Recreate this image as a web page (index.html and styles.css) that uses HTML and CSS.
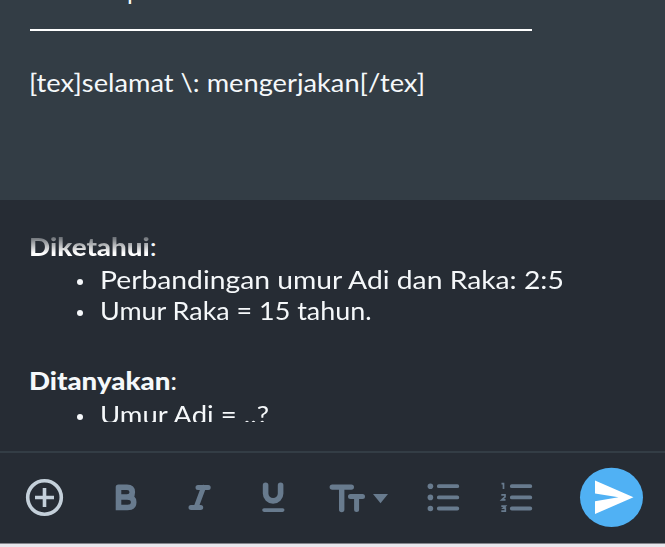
FILE: index.html
```html
<!DOCTYPE html>
<html lang="id">
<head>
<meta charset="utf-8">
<title>Jawaban</title>
<link rel="stylesheet" href="styles.css">
</head>
<body>
<main class="app">
  <section class="question">
    <div class="cut-line"><span>p</span></div>
    <div class="rule"></div>
    <p class="text tex"><span class="w-tex">[tex]selamat \: mengerjakan[/tex]</span></p>
  </section>
  <section class="editor">
    <div class="scroll">
      <p class="text heading"><span class="w-known"><b class="faded">Diketahui</b>:</span></p>
      <ul class="list">
        <li class="text"><span class="w-ratio">Perbandingan umur Adi dan Raka: 2:5</span></li>
        <li class="text"><span class="w-age">Umur Raka = 15 tahun.</span></li>
      </ul>
      <p class="text heading asked"><span class="w-asked"><b>Ditanyakan</b>:</span></p>
      <ul class="list">
        <li class="text"><span class="w-adi">Umur Adi = ..?</span></li>
      </ul>
    </div>
  </section>
  <footer class="toolbar">
    <svg class="icons" viewBox="0 453 665 90" width="665" height="90">
      <g fill="none" stroke="#c4d0da" stroke-width="3.6">
        <circle cx="44.5" cy="497.5" r="16.8"/>
        <path d="M35 497.5h19M44.5 488v19"/>
      </g>
      <g fill="none" stroke="#687b8e" stroke-width="5" stroke-linecap="round" stroke-linejoin="round">
        <path d="M118.500 487.300H127Q132.300 487.300 132.300 492.200Q132.300 497 127 497H118.500M127 497Q133.700 497 133.700 502.200Q133.700 507.500 127.500 507.500H118.500V487.300" stroke-width="5.600" stroke-linejoin="miter"/>
        <path d="M198 487.400h10.200M191 507.500h9.700M203.500 487.400l-7.500 20.100"/>
        <path d="M265.600 485.200v8.200a7.500 7.500 0 0 0 15 0v-8.200" stroke-width="5.600"/>
        <path d="M264 510.100h18.700" stroke-width="3.6"/>
        <path d="M332.300 487.100h19M341.700 487.100v22.500" stroke-width="5.400"/>
        <path d="M350.500 496.600h12M356.600 496.600v13" stroke-width="5"/>
        <path d="M438.800 486.200h18.500M438.800 497.400h18.500M438.800 508.500h18.500M511.800 486.200h18.500M511.800 497.400h18.500M511.800 508.500h18.500" stroke-width="3.800"/>
        <path d="M501.500 483.700h2v5.200M501.300 494.900h3.700v2l-3.200 3h3.700M501.300 506.100h4l-2 2h2v3h-4" stroke-width="1.700" stroke-linecap="butt" stroke-linejoin="miter"/>
      </g>
      <g fill="#687b8e">
        <path d="M373 494h15l-7.500 9.200z"/>
        <circle cx="430.400" cy="486.300" r="2.800"/>
        <circle cx="430.400" cy="497.400" r="2.800"/>
        <circle cx="430.400" cy="508.500" r="2.800"/>
      </g>
      <ellipse cx="611.500" cy="497.400" rx="31.500" ry="29.600" fill="#50b1f4"/>
      <path d="M595 480.500L633.500 497.300L595 514V501.200L618.500 497.300L595 493.500z" fill="#fff"/>
    </svg>
  </footer>
  <div class="edge"></div>
</main>
</body>
</html>
```
FILE: styles.css
```css
* { box-sizing: border-box; margin: 0; padding: 0; }
body { background: #262c34; color: #f5f8fa; font-family: Lato, "Open Sans", sans-serif; }
.app { width: 665px; height: 547px; display: flex; flex-direction: column; overflow: hidden; }
.question { height: 200px; background: #333d45; padding-left: 30px; flex: none; }
.cut-line { height: 29px; padding-left: 97px; overflow: hidden; font-size: 25px; line-height: 30px; }
.cut-line span { display: block; margin-top: -25px; }
.rule { width: 502px; height: 2px; background: #fff; }
.text { font-size: 25px; line-height: 32px; white-space: nowrap; }
.text span { display: inline-block; transform-origin: 0 50%; }
.w-tex { transform: translateX(-1px) scaleX(1.09); }
.w-known { transform: translateX(-1px) scaleX(1.112); }
.w-ratio { transform: scaleX(1.131); }
.w-age { transform: scaleX(1.076); }
.w-asked { transform: translateX(-1px) scaleX(1.106); }
.w-adi { transform: scaleX(1.1); }
.tex { margin-top: 35px; }
.editor { height: 251px; padding: 31px 0 0 30px; flex: none; }
.scroll { height: 191px; overflow: hidden; }
.scroll > :first-child { margin-top: -1px; }
.list { list-style: none; padding-left: 70px; }
.list li { display: flex; align-items: center; }
.list li + li { margin-top: -1px; }
.list li::before { content: ""; width: 6px; height: 6px; border-radius: 50%; background: #f5f8fa; margin: 5px 17px 0 -23px; flex: none; }
.heading { height: 33px; }
.heading b { font-weight: 900; }
.asked { margin-top: 38px; height: 34px; }
.faded { color: transparent; background: linear-gradient(#444a51 2px, #fff 22px); background-clip: text; -webkit-background-clip: text; }
.toolbar { height: 92px; border-top: 2px solid #333d45; flex: none; }
.icons { display: block; }
.edge { height: 4px; background: #e8e7ec; border-top: 1px solid #85878d; }
```
